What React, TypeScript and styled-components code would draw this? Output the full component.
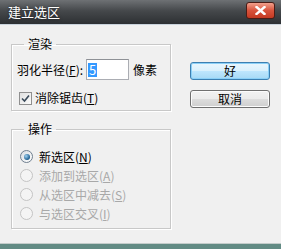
import styled, { createGlobalStyle } from "styled-components";

const GlobalStyle = createGlobalStyle`
  html, body {
    margin: 0;
    padding: 0;
    background: #f0f0f0;
  }
  body {
    font-family: "Noto Sans CJK SC", "Liberation Sans", sans-serif;
    font-size: 12px;
  }
`;

const Window = styled.div`
  width: 281px;
  height: 249px;
  display: flex;
  flex-direction: column;
  background: #f0f0f0;
  overflow: hidden;
`;

const TitleBar = styled.div`
  height: 24px;
  display: flex;
  align-items: center;
  justify-content: space-between;
  padding: 0 6px 0 8px;
  background: linear-gradient(#6e7174, #45484b 45%, #2d3033);
  border-bottom: 1px solid #c9d3dc;
`;

const Title = styled.span`
  color: #fff;
  font-size: 13px;
  line-height: 16px;
  text-shadow: 0 0 3px rgba(0, 0, 0, 0.6);
`;

const CloseButton = styled.div`
  width: 27px;
  height: 15px;
  border: 1px solid #4a1c16;
  border-radius: 3px;
  background: linear-gradient(#f1a08c, #d8533c 50%, #c43a22);
  display: flex;
  align-items: center;
  justify-content: center;
  margin-top: -4px;
`;

const Body = styled.div`
  flex: 1;
  display: flex;
  padding: 12px 0 0 11px;
`;

const LeftColumn = styled.div`
  width: 160px;
  display: flex;
  flex-direction: column;
  gap: 11px;
`;

const Group = styled.fieldset<{ $pt: number; $pb: number }>`
  margin: 0;
  border: 1px solid #c8c8c8;
  box-shadow: inset 1px 1px 0 #fff, 1px 1px 0 #fff;
  padding: ${(p) => p.$pt}px 4px ${(p) => p.$pb}px 5px;
  display: flex;
  flex-direction: column;
  min-width: 0;
`;

const Legend = styled.legend`
  padding: 0 4px;
  margin-left: 7px;
  line-height: 14px;
  color: #000;
`;

const Row = styled.div<{ $h: number }>`
  height: ${(p) => p.$h}px;
  display: flex;
  align-items: center;
  white-space: nowrap;
  color: #000;
`;

const Label = styled.span<{ $disabled?: boolean }>`
  color: ${(p) => (p.$disabled ? "#a8a8a8" : "#000")};
  line-height: 14px;
`;

const Input = styled.div`
  width: 40px;
  height: 19px;
  margin: 0 4px 0 3px;
  background: #fff;
  border: 1px solid #abadb3;
  border-top-color: #8e9196;
  display: flex;
  align-items: center;
  padding-left: 1px;
`;

const Selected = styled.span`
  background: #3399ff;
  color: #fff;
  font-size: 13px;
  line-height: 14px;
  padding: 0 1px;
`;

const CheckBox = styled.span`
  width: 11px;
  height: 11px;
  border: 1px solid #8f8f8f;
  background: linear-gradient(135deg, #e0e0e0, #fbfbfb);
  margin: 0 3px 0 2px;
  display: flex;
  align-items: center;
  justify-content: center;
`;

const Radio = styled.span<{ $on?: boolean; $disabled?: boolean }>`
  width: 11px;
  height: 11px;
  border-radius: 50%;
  border: 1px solid ${(p) => (p.$disabled ? "#c4c4c4" : "#6f7f8f")};
  background: ${(p) => (p.$disabled ? "#f4f4f4" : "linear-gradient(135deg, #d8dde2, #fff)")};
  margin: 0 6px 0 3px;
  display: flex;
  align-items: center;
  justify-content: center;
`;

const Dot = styled.span`
  width: 6px;
  height: 6px;
  border-radius: 50%;
  background: radial-gradient(circle at 35% 35%, #9fd2f2, #1d5d8e 70%);
`;

const RightColumn = styled.div`
  display: flex;
  flex-direction: column;
  gap: 10px;
  padding: 25px 0 0 19px;
`;

const Button = styled.div<{ $default?: boolean }>`
  width: 78px;
  height: 16px;
  border: 1px solid ${(p) => (p.$default ? "#3c7fb1" : "#707070")};
  border-radius: 3px;
  background: ${(p) =>
    p.$default
      ? "linear-gradient(#eaf6fd 0%, #d9f0fc 50%, #bee6fd 51%, #a7d9f5 100%)"
      : "linear-gradient(#f2f2f2 0%, #ebebeb 50%, #dddddd 51%, #cfcfcf 100%)"};
  box-shadow: inset 0 0 0 1px ${(p) => (p.$default ? "#8bd0f7" : "#fcfcfc")};
  display: flex;
  align-items: center;
  justify-content: center;
  color: #000;
  line-height: 14px;
`;

const BottomStrip = styled.div`
  height: 5px;
  border-top: 1px solid #c3ccca;
  background: #628b84;
`;

const options = [
  { text: "新选区", key: "N", on: true },
  { text: "添加到选区", key: "A" },
  { text: "从选区中减去", key: "S" },
  { text: "与选区交叉", key: "I" },
];

export default function App() {
  return (
    <>
      <GlobalStyle />
      <Window>
        <TitleBar>
          <Title>建立选区</Title>
          <CloseButton>
            <svg width="11" height="9" viewBox="0 0 11 9">
              <path d="M1.5 1 L9.5 8 M9.5 1 L1.5 8" stroke="#fff" strokeWidth="2.4" strokeLinecap="square" />
            </svg>
          </CloseButton>
        </TitleBar>
        <Body>
          <LeftColumn>
            <Group $pt={8} $pb={4}>
              <Legend>渲染</Legend>
              <Row $h={21}>
                <Label>
                  羽化半径(<u>F</u>):
                </Label>
                <Input>
                  <Selected>5</Selected>
                </Input>
                <Label>像素</Label>
              </Row>
              <Row $h={16} style={{ marginTop: 10 }}>
                <CheckBox>
                  <svg width="9" height="9" viewBox="0 0 9 9">
                    <path d="M1 4.5 L3.5 7 L8 1.5" stroke="#3a4a5a" strokeWidth="1.6" fill="none" />
                  </svg>
                </CheckBox>
                <Label>
                  消除锯齿(<u>T</u>)
                </Label>
              </Row>
            </Group>
            <Group $pt={11} $pb={5}>
              <Legend>操作</Legend>
              {options.map((o) => (
                <Row $h={19} key={o.key}>
                  <Radio $on={o.on} $disabled={!o.on}>
                    {o.on && <Dot />}
                  </Radio>
                  <Label $disabled={!o.on}>
                    {o.text}(<u>{o.key}</u>)
                  </Label>
                </Row>
              ))}
            </Group>
          </LeftColumn>
          <RightColumn>
            <Button $default>好</Button>
            <Button>取消</Button>
          </RightColumn>
        </Body>
        <BottomStrip />
      </Window>
    </>
  );
}
